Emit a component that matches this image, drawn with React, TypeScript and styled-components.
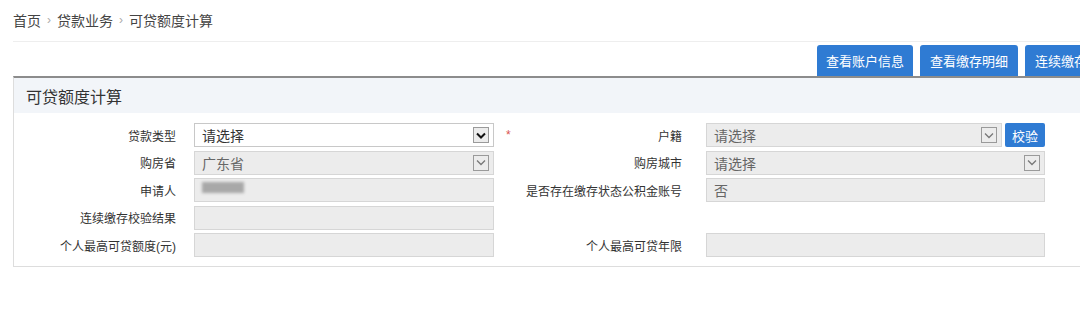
import React from 'react'
import styled, { createGlobalStyle } from 'styled-components'

const GlobalStyle = createGlobalStyle`
  html, body {
    margin: 0;
    padding: 0;
    background: #fff;
    overflow: hidden;
  }
  body {
    font-family: "Liberation Sans", "Noto Sans CJK SC", sans-serif;
    color: #333;
  }
`

const Page = styled.div`
  width: 1110px;
  padding-left: 13px;
`

const Breadcrumb = styled.div`
  height: 42px;
  display: flex;
  align-items: center;
  font-size: 14px;
  color: #444;
  border-bottom: 1px solid #eeeeee;
  padding-bottom: 2px;
  box-sizing: border-box;
`

const Sep = styled.span`
  color: #aaa;
  font-size: 12px;
  margin: 0 6px;
`

const Toolbar = styled.div`
  display: flex;
  justify-content: flex-end;
  gap: 7px;
  padding-top: 3px;
`

const TopButton = styled.button<{ $w: number }>`
  width: ${p => p.$w}px;
  height: 31px;
  border: none;
  border-radius: 3px 3px 0 0;
  background: #2f7bd3;
  color: #fff;
  font-family: "Liberation Sans", "Noto Sans CJK SC", sans-serif;
  font-size: 13px;
  padding: 0;
  white-space: nowrap;
  overflow: hidden;
`

const Panel = styled.div`
  border: 1px solid #dddddd;
  border-top: 2px solid #8c8c8c;
`

const PanelHeader = styled.div`
  height: 35px;
  background: #f2f5f9;
  display: flex;
  align-items: center;
  padding-left: 12px;
  font-size: 16px;
  color: #333;
  font-family: "Noto Sans CJK SC", sans-serif;
`

const Form = styled.div`
  display: grid;
  grid-template-columns: 180px 300px 36px 176px 339px;
  grid-auto-rows: 24px;
  row-gap: 3.5px;
  padding: 10px 0 9px;
`

const Label = styled.div`
  font-size: 12px;
  color: #333;
  text-align: right;
  padding-right: ${p => (p.$right ? 24 : 18)}px;
  display: flex;
  align-items: center;
  justify-content: flex-end;
  white-space: nowrap;
` as React.FC<any>

const Marker = styled.div`
  color: #d9534f;
  font-size: 12px;
  padding-left: 12px;
  display: flex;
  align-items: center;
`

const Field = styled.div<{ $active?: boolean }>`
  box-sizing: border-box;
  height: 24px;
  border: 1px solid ${p => (p.$active ? '#c8c8c8' : '#d6d6d6')};
  background: ${p => (p.$active ? '#fff' : '#ececec')};
  color: ${p => (p.$active ? '#333' : '#666')};
  font-size: 14px;
  display: flex;
  align-items: center;
  padding-left: 7px;
  position: relative;
`

const FieldRow = styled.div`
  display: flex;
  gap: 3px;
`

const ArrowBox = styled.span<{ $active?: boolean }>`
  position: absolute;
  right: 4px;
  top: 3px;
  width: 16px;
  height: 16px;
  box-sizing: border-box;
  border: 1px solid #9a9a9a;
  background: #ececec;
  display: flex;
  align-items: center;
  justify-content: center;
  color: ${p => (p.$active ? '#111' : '#777')};
`

const CheckButton = styled.button`
  width: 40px;
  height: 24px;
  border: none;
  border-radius: 2px;
  background: #2f7bd3;
  color: #fff;
  font-size: 13px;
  font-family: "Liberation Sans", "Noto Sans CJK SC", sans-serif;
  padding: 0;
  flex-shrink: 0;
`

const Blurred = styled.span`
  display: inline-block;
  width: 42px;
  height: 11px;
  background: #a8a8a8;
  filter: blur(1.5px);
  margin-top: -6px;
`

const Chevron = ({ active }: { active?: boolean }) => (
  <svg width="10" height="7" viewBox="0 0 10 7">
    <path
      d="M1 1.5 L5 5.5 L9 1.5"
      fill="none"
      stroke="currentColor"
      strokeWidth={active ? 2 : 1.3}
    />
  </svg>
)

const Select = ({ value, active, style }: { value: string; active?: boolean; style?: React.CSSProperties }) => (
  <Field $active={active} style={style}>
    {value}
    <ArrowBox $active={active}>
      <Chevron active={active} />
    </ArrowBox>
  </Field>
)

const Empty = () => <div />

export default function App() {
  return (
    <Page>
      <GlobalStyle />
      <Breadcrumb>
        首页<Sep>›</Sep>贷款业务<Sep>›</Sep>可贷额度计算
      </Breadcrumb>
      <Toolbar>
        <TopButton $w={96}>查看账户信息</TopButton>
        <TopButton $w={98}>查看缴存明细</TopButton>
        <TopButton $w={98}>连续缴存校验</TopButton>
      </Toolbar>
      <Panel>
        <PanelHeader>可贷额度计算</PanelHeader>
        <Form>
          <Label>贷款类型</Label>
          <Select value="请选择" active />
          <Marker>*</Marker>
          <Label $right>户籍</Label>
          <FieldRow>
            <Select value="请选择" style={{ flex: 1 }} />
            <CheckButton>校验</CheckButton>
          </FieldRow>

          <Label>购房省</Label>
          <Select value="广东省" />
          <Empty />
          <Label $right>购房城市</Label>
          <Select value="请选择" />

          <Label>申请人</Label>
          <Field>
            <Blurred />
          </Field>
          <Empty />
          <Label $right>是否存在缴存状态公积金账号</Label>
          <Field>否</Field>

          <Label>连续缴存校验结果</Label>
          <Field />
          <Empty />
          <Empty />
          <Empty />

          <Label>个人最高可贷额度(元)</Label>
          <Field />
          <Empty />
          <Label $right>个人最高可贷年限</Label>
          <Field />
        </Form>
      </Panel>
    </Page>
  )
}
